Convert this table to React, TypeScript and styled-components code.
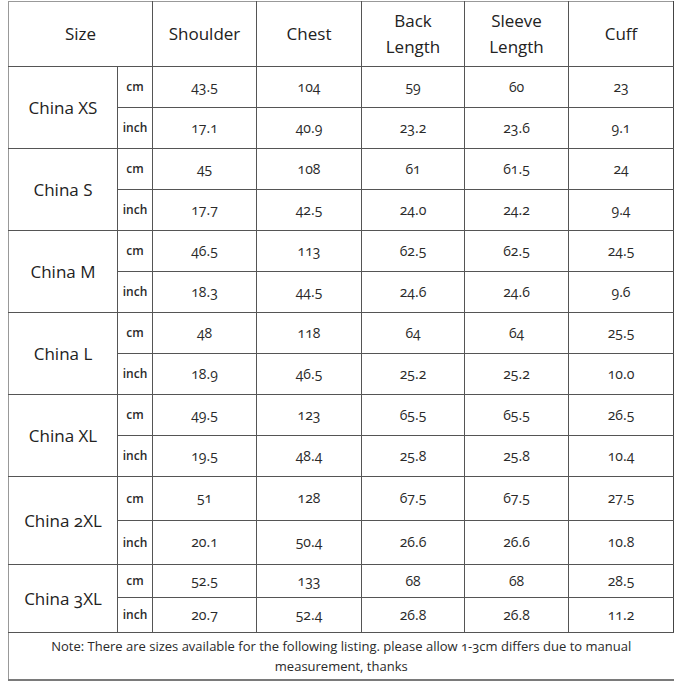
import React from "react";
import styled, { createGlobalStyle } from "styled-components";

const Global = createGlobalStyle`
  html, body { margin: 0; padding: 0; background: #ffffff; }
  body { font-family: "Open Sans", "Noto Sans", sans-serif; color: #333; }
`;

const Page = styled.div`
  width: 682px;
  height: 682px;
  padding: 1px 0 0 8px;
  box-sizing: border-box;
  background: #fff;
  overflow: hidden;
`;

const Table = styled.table`
  width: 665px;
  border-collapse: collapse;
  table-layout: fixed;
  font-variant-numeric: oldstyle-nums;
  font-feature-settings: "onum" 1;
`;

const line = "1px solid #555";

const HeaderCell = styled.th`
  border: ${line};
  border-top-color: #999;
  height: 64px;
  padding: 0;
  font-weight: 500;
  font-size: 17px;
  line-height: 26px;
  color: #222;
  text-align: center;
  vertical-align: middle;
  &:first-child { border-left: 1px solid #999; }
  &:last-child { border-right-color: #444; }
`;

const Row = styled.tr<{ $h: number }>`
  height: ${(p) => p.$h}px;
`;

const SizeCell = styled.td`
  border: ${line};
  border-left: 1px solid #999;
  padding: 0;
  font-size: 17px;
  font-weight: 500;
  color: #222;
  text-align: center;
  vertical-align: middle;
`;

const UnitCell = styled.td`
  border: ${line};
  padding: 0 0 1px;
  font-size: 12px;
  font-weight: 600;
  color: #2a2a2a;
  text-align: center;
  vertical-align: middle;
`;

const ValueCell = styled.td`
  border: ${line};
  padding: 0 0 2px;
  font-size: 14px;
  font-weight: 500;
  color: #2a2a2a;
  text-align: center;
  vertical-align: middle;
  &:last-child { border-right-color: #444; }
`;

const NoteCell = styled.td`
  border-left: 1px solid #999;
  border-bottom: 2px solid #7a7a7a;
  border-top: ${line};
  height: 41px;
  padding: 3px 36px 2px;
  font-size: 13px;
  line-height: 20px;
  color: #2a2a2a;
  text-align: center;
  vertical-align: top;
`;

type Size = { name: string; cm: string[]; inch: string[]; h: [number, number] };

const sizes: Size[] = [
  { name: "China XS", cm: ["43.5", "104", "59", "60", "23"], inch: ["17.1", "40.9", "23.2", "23.6", "9.1"], h: [41, 41] },
  { name: "China S", cm: ["45", "108", "61", "61.5", "24"], inch: ["17.7", "42.5", "24.0", "24.2", "9.4"], h: [41, 41] },
  { name: "China M", cm: ["46.5", "113", "62.5", "62.5", "24.5"], inch: ["18.3", "44.5", "24.6", "24.6", "9.6"], h: [41, 41] },
  { name: "China L", cm: ["48", "118", "64", "64", "25.5"], inch: ["18.9", "46.5", "25.2", "25.2", "10.0"], h: [41, 41] },
  { name: "China XL", cm: ["49.5", "123", "65.5", "65.5", "26.5"], inch: ["19.5", "48.4", "25.8", "25.8", "10.4"], h: [41, 41] },
  { name: "China 2XL", cm: ["51", "128", "67.5", "67.5", "27.5"], inch: ["20.1", "50.4", "26.6", "26.6", "10.8"], h: [44, 44] },
  { name: "China 3XL", cm: ["52.5", "133", "68", "68", "28.5"], inch: ["20.7", "52.4", "26.8", "26.8", "11.2"], h: [33, 35] },
];

export default function App() {
  return (
    <Page>
      <Global />
      <Table>
        <colgroup>
          <col style={{ width: 109 }} />
          <col style={{ width: 35 }} />
          <col style={{ width: 104 }} />
          <col style={{ width: 105 }} />
          <col style={{ width: 103 }} />
          <col style={{ width: 104 }} />
          <col style={{ width: 105 }} />
        </colgroup>
        <thead>
          <tr>
            <HeaderCell colSpan={2}>Size</HeaderCell>
            <HeaderCell>Shoulder</HeaderCell>
            <HeaderCell>Chest</HeaderCell>
            <HeaderCell>
              Back
              <br />
              Length
            </HeaderCell>
            <HeaderCell>
              Sleeve
              <br />
              Length
            </HeaderCell>
            <HeaderCell>Cuff</HeaderCell>
          </tr>
        </thead>
        <tbody>
          {sizes.map((s) => (
            <React.Fragment key={s.name}>
              <Row $h={s.h[0]}>
                <SizeCell rowSpan={2}>{s.name}</SizeCell>
                <UnitCell>cm</UnitCell>
                {s.cm.map((v, i) => (
                  <ValueCell key={i}>{v}</ValueCell>
                ))}
              </Row>
              <Row $h={s.h[1]}>
                <UnitCell>inch</UnitCell>
                {s.inch.map((v, i) => (
                  <ValueCell key={i}>{v}</ValueCell>
                ))}
              </Row>
            </React.Fragment>
          ))}
          <tr>
            <NoteCell colSpan={7}>
              Note: There are sizes available for the following listing. please allow 1-3cm differs due to manual
              measurement, thanks
            </NoteCell>
          </tr>
        </tbody>
      </Table>
    </Page>
  );
}
